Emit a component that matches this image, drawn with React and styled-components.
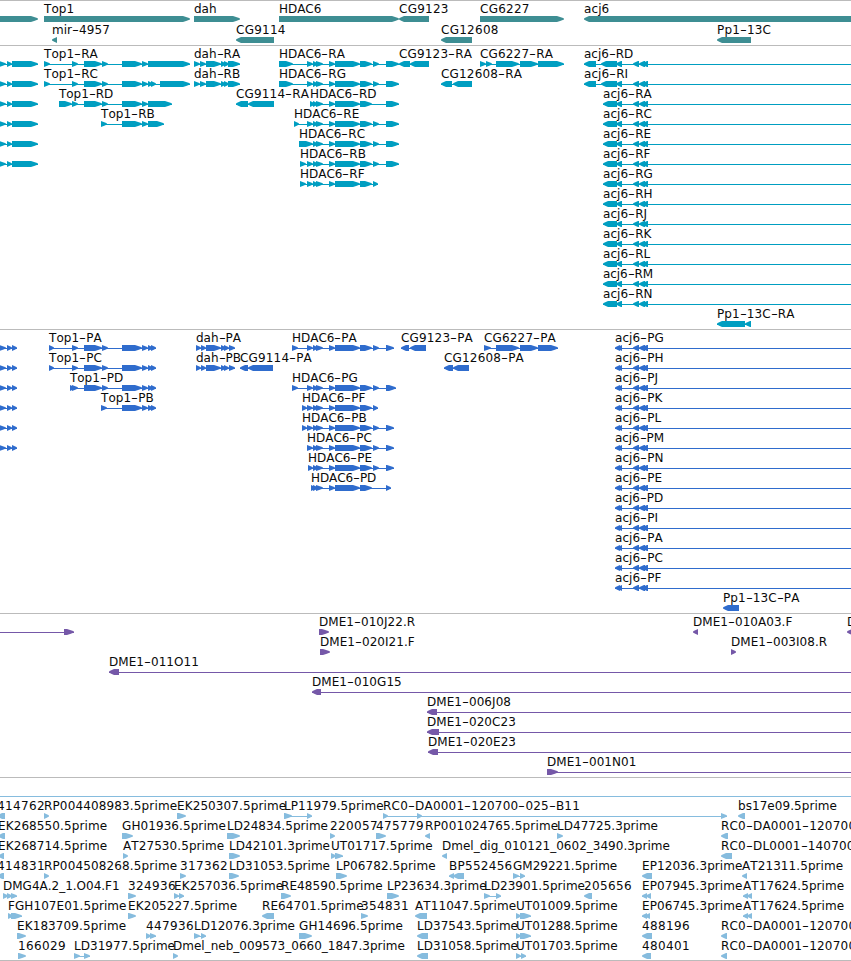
import React from 'react'
import styled, { createGlobalStyle } from 'styled-components'

const GlobalStyle = createGlobalStyle`
body {
  margin: 0;
  background: #fff;
  overflow: hidden;
}
`

const Browser = styled.main`
width: 851px;
height: 961px;
display: flex;
flex-direction: column;
overflow: hidden;
background: #fff;
color: #000;
font-family: "DejaVu Sans", sans-serif;
font-size: 12px;
font-kerning: none;
`

const Track = styled.section`
display: flex;
flex-direction: column;
flex: none;
border-top: 1px solid ${(props) => props.$line || "#bbbbbb"};
padding: ${(props) => props.$pad || "1px 0 2px"};
color: ${(props) => props.$color};
`

const Closing = styled.div`
flex: none;
height: ${(props) => props.$height || "1px"};
border-top: 1px solid #bbbbbb;
box-sizing: border-box;
`

const Lane = styled.div`
display: grid;
grid-template-rows: 1fr 6px;
height: ${(props) => props.$height || 20}px;
`

const Labels = styled.div`
display: grid;
grid-template-columns: 851px;
align-items: end;
`

const Label = styled.span`
grid-area: 1 / 1;
justify-self: start;
color: #0a0a0a;
line-height: 14px;
white-space: pre;
`

const Dash = styled.span`
display: inline-block;
width: 7px;
text-indent: 1.3px;
transform: scaleX(1.6);
`

const Glyphs = styled.svg`
display: block;
width: 851px;
height: 6px;
fill: currentColor;
`

// feature: [label, direction, parts, line end, line start]
const R = "right"
const L = "left"

// how much wider than the font's own advance a character is set
const extra = (text) => {
    let sum = 0
    for (const c of text) {
        if (/\d/.test(c)) sum += 0.37
        else if (c === "m" || c === "M") sum -= 1.1
        else if (c === "D" || c === "_") sum -= 0.6
    }
    return sum / text.length
}

const points = (dir, s, e) => {
    const tip = Math.min(e - s, dir === R ? 7 : 5)
    const at = (x, y) => `${dir === R ? e - x : s + x},${y}`
    const back = dir === R ? s : e
    return [
        `${back},0`,
        at(tip, 0),
        at(tip * 0.45, 1.3),
        at(0, 2.5),
        at(0, 3.5),
        at(tip * 0.45, 4.7),
        at(tip, 6),
        `${back},6`,
    ].join(" ")
}

const Feature = ({ dir, parts, to, from }) => {
    const start = from ?? parts[0][0]
    const end = to ?? parts[parts.length - 1][1]
    return (
        <g>
            {(parts.length > 1 || to || from !== undefined) && (
                <rect x={start} y="3" width={end - start} height="1" />
            )}
            {parts.map(([s, e]) => (
                <polygon key={s} points={points(dir, s, e)} />
            ))}
        </g>
    )
}

const Name = ({ text, x }) => (
    <Label style={{ marginLeft: x, letterSpacing: `${extra(text).toFixed(3)}px` }}>
        {text.split("-").map((piece, i) => (
            <React.Fragment key={i}>
                {i > 0 && <Dash>-</Dash>}
                {piece}
            </React.Fragment>
        ))}
    </Label>
)

const Row = ({ items, height }) => (
    <Lane $height={height}>
        <Labels>
            {items.filter((f) => f[0]).map((f) => (
                <Name key={f[0]} text={f[0]} x={f[2][0][0]} />
            ))}
        </Labels>
        <Glyphs viewBox="0 0 851 6">
            {items.map((f, i) => (
                <Feature key={i} dir={f[1]} parts={f[2]} to={f[3]} from={f[4]} />
            ))}
        </Glyphs>
    </Lane>
)

// exon runs shared by the transcripts
const top1Mid = [[84, 102], [102, 108], [122, 142], [142, 148]]
const top1Cds = [...top1Mid, [148, 153], [151, 156]]
const hdacMid = [[313, 318], [316, 323], [329, 335], [335, 360], [360, 372]]
const hdacTail = [...hdacMid, [373, 379], [386, 399]]
const hdacCds = [...hdacMid, [373, 379], [386, 394]]
const acjTail = [[633, 639], [639, 645], [642, 648]]
const dahMid = [[206, 221], [221, 226], [224, 229]]

const edgeRna = ["", R, [[-3, 6], [7, 12], [12, 38]]]
const edgeCds = ["", R, [[-3, 6], [7, 12], [12, 17]]]
const acjLong = (name) => [name, L, [[584, 596], [601, 617], [616, 622], ...acjTail], 851]
const acjRna = (name) => [name, L, [[603, 617], [616, 622], ...acjTail], 851]
const acjCds = (name) => [name, L, [[615, 620], [617, 622], ...acjTail], 851]

const genes = [
    [
        ["", R, [[-10, 38]]],
        ["Top1", R, [[44, 190]]],
        ["dah", R, [[194, 240]]],
        ["HDAC6", R, [[279, 399]]],
        ["CG9123", L, [[399, 429]]],
        ["CG6227", R, [[480, 564]]],
        ["acj6", L, [[584, 860]]],
    ],
    [
        ["mir-4957", L, [[52, 57]]],
        ["CG9114", L, [[236, 274]]],
        ["CG12608", L, [[441, 472]]],
        ["Pp1-13C", L, [[717, 751]]],
    ],
]

const transcripts = [
    [
        edgeRna,
        ["Top1-RA", R, [[44, 50], [72, 78], ...top1Mid, [148, 190]]],
        ["dah-RA", R, [[194, 200], [200, 206], ...dahMid, [228, 240]]],
        ["HDAC6-RA", R, [[279, 293], [307, 313], ...hdacTail]],
        ["CG9123-RA", L, [[399, 410], [410, 429]]],
        ["CG6227-RA", R, [[480, 486], [486, 492], [496, 519], [520, 538], [538, 564]]],
        acjLong("acj6-RD"),
    ],
    [
        edgeRna,
        ["Top1-RC", R, [[44, 50], [72, 78], ...top1Mid, [148, 153], [151, 156], [160, 190]]],
        ["dah-RB", R, [[194, 200], [200, 206], ...dahMid, [228, 240]]],
        ["HDAC6-RG", R, [[279, 293], [307, 313], ...hdacTail]],
        ["CG12608-RA", L, [[441, 452], [453, 472]]],
        acjLong("acj6-RI"),
    ],
    [
        edgeRna,
        ["Top1-RD", R, [[59, 72], [72, 78], ...top1Mid, [148, 172]]],
        ["CG9114-RA", L, [[236, 248], [248, 274]]],
        ["HDAC6-RD", R, [[310, 315], ...hdacMid, [386, 399]]],
        acjRna("acj6-RA"),
    ],
    [
        edgeRna,
        ["Top1-RB", R, [[101, 107], [122, 142], [142, 148], [148, 164]]],
        ["HDAC6-RE", R, [[294, 299], [307, 313], ...hdacTail]],
        acjRna("acj6-RC"),
    ],
    [edgeRna, ["HDAC6-RC", R, [[299, 313], ...hdacTail]], acjRna("acj6-RE")],
    [edgeRna, ["HDAC6-RB", R, [[300, 306], [307, 313], ...hdacTail]], acjRna("acj6-RF")],
    [["HDAC6-RF", R, [[300, 306], [307, 313], ...hdacMid, [373, 378]]], acjRna("acj6-RG")],
    ...["acj6-RH", "acj6-RJ", "acj6-RK", "acj6-RL", "acj6-RM", "acj6-RN"].map((n) => [acjRna(n)]),
    [["Pp1-13C-RA", L, [[717, 745], [745, 751]]]],
]

const proteins = [
    [
        edgeCds,
        ["Top1-PA", R, [[49, 54], [72, 78], ...top1Cds]],
        ["dah-PA", R, [[196, 201], [201, 206], ...dahMid, [229, 235]]],
        ["HDAC6-PA", R, [[292, 298], [307, 313], ...hdacCds]],
        ["CG9123-PA", L, [[401, 409], [410, 426]]],
        ["CG6227-PA", R, [[484, 491], [496, 519], [520, 538], [538, 558]]],
        acjCds("acj6-PG"),
    ],
    [
        edgeCds,
        ["Top1-PC", R, [[49, 54], [72, 78], ...top1Cds]],
        ["dah-PB", R, [[196, 201], [201, 206], ...dahMid, [229, 235]]],
        ["CG9114-PA", L, [[240, 248], [248, 273]]],
        ["CG12608-PA", L, [[444, 453], [453, 469]]],
        acjCds("acj6-PH"),
    ],
    [
        edgeCds,
        ["Top1-PD", R, [[70, 75], [72, 78], ...top1Cds]],
        ["HDAC6-PG", R, [[292, 298], [307, 313], ...hdacMid, [373, 379], [386, 396]]],
        acjCds("acj6-PJ"),
    ],
    [
        edgeCds,
        ["Top1-PB", R, [[101, 107], ...top1Cds.slice(2)]],
        ["HDAC6-PF", R, [[302, 307], [307, 313], ...hdacMid, [373, 378]]],
        acjCds("acj6-PK"),
    ],
    [edgeCds, ["HDAC6-PB", R, [[302, 307], [307, 313], ...hdacCds]], acjCds("acj6-PL")],
    [edgeCds, ["HDAC6-PC", R, [[307, 313], ...hdacCds]], acjCds("acj6-PM")],
    [["HDAC6-PE", R, [[308, 313], ...hdacCds]], acjCds("acj6-PN")],
    [["HDAC6-PD", R, [[311, 316], ...hdacMid, [386, 391]]], acjCds("acj6-PE")],
    ...["acj6-PD", "acj6-PI", "acj6-PA", "acj6-PC", "acj6-PF"].map((n) => [acjCds(n)]),
    [["Pp1-13C-PA", L, [[723, 739]]]],
]

const bacs = [
    [
        ["", R, [[64, 74]], 74, 0],
        ["DME1-010J22.R", R, [[319, 329]]],
        ["DME1-010A03.F", L, [[693, 698]]],
        ["DME1", L, [[847, 852]]],
    ],
    [["DME1-020I21.F", R, [[320, 330]]], ["DME1-003I08.R", R, [[731, 736]]]],
    [["DME1-011O11", L, [[109, 119]], 851]],
    [["DME1-010G15", L, [[312, 321]], 851]],
    [["DME1-006J08", L, [[427, 437]], 851]],
    [["DME1-020C23", L, [[427, 439]], 851]],
    [["DME1-020E23", L, [[428, 438]], 851]],
    [["DME1-001N01", R, [[547, 558]], 851]],
]

const ests = [
    [
        ["414762", L, [[-3, 5]]],
        ["RP004408983.5prime", R, [[44, 49]]],
        ["EK250307.5prime", R, [[177, 186]]],
        ["LP11979.5prime", R, [[284, 292], [307, 312]]],
        ["RC0-DA0001-120700-025-B11", R, [[383, 388], [417, 422], [721, 727]]],
        ["bs17e09.5prime", L, [[738, 745]]],
    ],
    [
        ["EK268550.5prime", L, [[-2, 5]]],
        ["GH01936.5prime", R, [[122, 133]]],
        ["LD24834.5prime", R, [[227, 240]]],
        ["220057", R, [[330, 335]]],
        ["475779", R, [[376, 386]]],
        ["RP001024765.5prime", L, [[425, 430]]],
        ["LD47725.3prime", R, [[557, 563]]],
        ["RC0-DA0001-120700", L, [[721, 728]]],
    ],
    [
        ["EK268714.5prime", L, [[-2, 4]]],
        ["AT27530.5prime", R, [[123, 128]]],
        ["LD42101.3prime", R, [[229, 240]]],
        ["UT01717.5prime", R, [[331, 336], [335, 343]]],
        ["Dmel_dig_010121_0602_3490.3prime", L, [[442, 447]]],
        ["RC0-DL0001-140700", L, [[721, 732]]],
    ],
    [
        ["414831", L, [[-3, 4]]],
        ["RP004508268.5prime", R, [[44, 49]]],
        ["317362", R, [[180, 186]]],
        ["LD31053.5prime", R, [[229, 239]]],
        ["LP06782.5prime", R, [[336, 347]]],
        ["BP552456", L, [[449, 454], [453, 464]]],
        ["GM29221.5prime", R, [[513, 519], [520, 525]]],
        ["EP12036.3prime", L, [[642, 652]]],
        ["AT21311.5prime", L, [[742, 747]]],
    ],
    [
        ["DMG4A.2_1.O04.F1", R, [[3, 8], [7, 12], [11, 17]]],
        ["324936", R, [[128, 136]]],
        ["EK257036.5prime", R, [[174, 179], [179, 184]]],
        ["RE48590.5prime", R, [[281, 291]]],
        ["LP23634.3prime", R, [[387, 399]]],
        ["LD23901.5prime", R, [[484, 490], [496, 501]]],
        ["205656", L, [[584, 592]]],
        ["EP07945.3prime", L, [[642, 647], [646, 651]]],
        ["AT17624.5prime", L, [[743, 748], [747, 752]]],
    ],
    [
        ["FGH107E01.5prime", R, [[8, 13], [11, 22]]],
        ["EK205227.5prime", R, [[128, 136]]],
        ["RE64701.5prime", L, [[262, 274]]],
        ["354831", R, [[361, 368]]],
        ["AT11047.5prime", L, [[415, 427]]],
        ["UT01009.5prime", R, [[516, 521], [520, 531]]],
        ["EP06745.3prime", L, [[642, 647], [645, 650]]],
        ["AT17624.5prime", L, [[743, 748], [747, 752]]],
    ],
    [
        ["EK183709.5prime", R, [[17, 26]]],
        ["447936", R, [[146, 151], [150, 156]]],
        ["LD12076.3prime", R, [[194, 200], [201, 206]]],
        ["GH14696.5prime", R, [[299, 312]]],
        ["LD37543.5prime", L, [[417, 428]]],
        ["UT01288.5prime", R, [[516, 521], [520, 531]]],
        ["488196", L, [[642, 652]]],
        ["RC0-DA0001-120700", L, [[721, 727]]],
    ],
    [
        ["166029", R, [[18, 26]]],
        ["LD31977.5prime", R, [[74, 80], [84, 90]]],
        ["Dmel_neb_009573_0660_1847.3prime", R, [[173, 178]]],
        ["LD31058.5prime", L, [[417, 428]]],
        ["UT01703.5prime", R, [[516, 521], [521, 526]]],
        ["480401", L, [[642, 651]]],
        ["RC0-DA0001-120700", L, [[721, 727]]],
    ],
]

const App = () => {
    return (
        <Browser>
            <GlobalStyle />
            <Track $color="#3e8e93" $pad="0 0 2px">
                {genes.map((row, i) => <Row key={i} items={row} height={21} />)}
            </Track>
            <Track $color="#009ec1">
                {transcripts.map((row, i) => <Row key={i} items={row} />)}
            </Track>
            <Track $color="#2f6ccd">
                {proteins.map((row, i) => <Row key={i} items={row} />)}
            </Track>
            <Track $color="#7558a8">
                {bacs.map((row, i) => <Row key={i} items={row} />)}
            </Track>
            <Closing $height="19px" />
            <Track $color="#86bcde" $line="#86bcde" $pad="2px 0 1px">
                {ests.map((row, i) => <Row key={i} items={row} />)}
            </Track>
            <Closing />
        </Browser>
    )
}

export default App
